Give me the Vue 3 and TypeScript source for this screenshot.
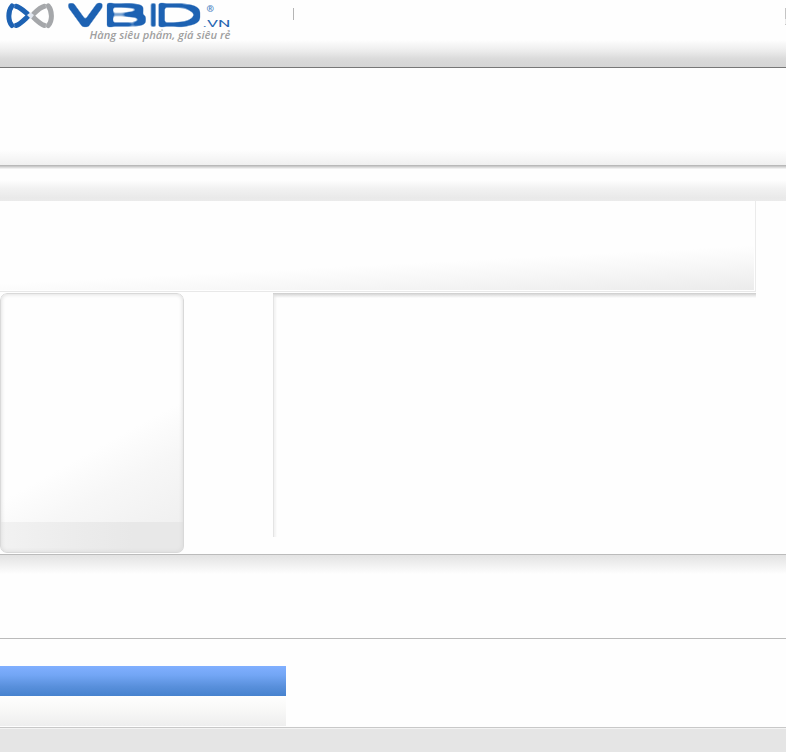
<script setup lang="ts">
interface Letter {
  char: string
  x: number
  scale: number
}

const wordmark: Letter[] = [
  { char: 'V', x: 69, scale: 1.95 },
  { char: 'B', x: 101.6, scale: 2.75 },
  { char: 'I', x: 147.8, scale: 1.5 },
  { char: 'D', x: 153.3, scale: 2.72 },
]
</script>

<template>
  <div class="page">
    <header class="header">
      <svg class="logo" width="240" height="46" viewBox="0 0 240 46">
        <defs>
          <filter id="heavy" x="60" y="0" width="150" height="34" filterUnits="userSpaceOnUse" color-interpolation-filters="sRGB">
            <feMorphology operator="dilate" radius="2" />
            <feGaussianBlur stdDeviation="0.9" />
            <feComponentTransfer><feFuncA type="linear" slope="2.600" intercept="-0.750" /></feComponentTransfer>
          </filter>
        </defs>
        <g fill="none" stroke-linecap="round" stroke-linejoin="round">
          <path d="M12 6C7.800 11 7.800 21 12 25.500" stroke="#1d62b3" stroke-width="5" />
          <path d="M16 6.200C20 7 24 11 27.500 14M16 25.500C20 24.500 24 20 28.500 16" stroke="#1d62b3" stroke-width="5" />
          <path d="M48.200 6C52.500 11 52.500 21 48.200 25.500" stroke="#a5a7aa" stroke-width="5" />
          <path d="M44.500 6.200C40.500 7 36.500 11 33.500 14M44.500 25.500C40.500 24.500 36 20 32 16" stroke="#a5a7aa" stroke-width="5" />
          <path d="M15 5Q9.800 15.700 15 27M45.500 5Q50.700 15.700 45.500 27" stroke="#fff" stroke-width=".5" opacity=".4" />
          <path d="M27 15L30.500 12.500L34 15L31 19Z" fill="#e2e7ef" />
        </g>
        <g class="wordmark" filter="url(#heavy)">
          <text
            v-for="letter in wordmark"
            :key="letter.char"
            :transform="`translate(${letter.x} 25) scale(${letter.scale} 1)`"
          >{{ letter.char }}</text>
        </g>
        <text class="registered" x="206.500" y="12">®</text>
        <text class="domain" x="202.500" y="26.500" textLength="28" lengthAdjust="spacingAndGlyphs">.VN</text>
        <text class="tagline" x="89.500" y="38.500" textLength="141" lengthAdjust="spacingAndGlyphs">Hàng siêu phẩm, giá siêu rẻ</text>
      </svg>
      <i class="divider"></i>
      <i class="edge"></i>
    </header>

    <div class="menu"></div>
    <div class="submenu"></div>

    <section class="feature"><div class="feature-fill"></div></section>

    <main class="content">
      <aside class="card">
        <div class="card-body"></div>
        <div class="card-foot"></div>
      </aside>
      <section class="panel"></section>
    </main>

    <div class="partners"></div>

    <section class="box">
      <div class="box-title"></div>
      <div class="box-body"></div>
    </section>
    <footer class="footer"></footer>
  </div>
</template>

<style>
body { margin: 0; background: #fefefe; }
</style>

<style scoped>
.page {
  height: 752px;
  overflow: hidden;
  display: flex;
  flex-direction: column;
  font-family: "Open Sans", "Liberation Sans", sans-serif;
}
.page > * { box-sizing: border-box; flex-shrink: 0; }
.header {
  height: 68px;
  display: flex;
  align-items: flex-start;
  border-bottom: 1px solid #777;
  background: linear-gradient(#fefefe 40px, #ececec 51px, #dadada 59px, #d5d5d5 67px);
}
.logo { display: block; }
.wordmark text {
  font: 100 28px Roboto, sans-serif;
  fill: #1d62b3;
}
.registered { font: 700 9px "Open Sans", sans-serif; fill: #4b82c2; }
.domain { font: 400 9.500px Roboto, sans-serif; fill: #2867b3; }
.tagline { font: italic 600 11.200px "Open Sans", sans-serif; fill: #a0a0a0; }
.divider { width: 1px; height: 12px; margin: 8px 0 0 53px; background: #b5b5b5; }
.edge {
  width: 1px;
  height: 17px;
  margin: 8px 0 0 auto;
  background: linear-gradient(#c4c4c4 11px, #ededed 11px 16px, #c4c4c4 16px);
}
.menu {
  height: 101px;
  background: linear-gradient(#fefefe 82px, #f0f0f0 97px, #b9b9b9 97px 98px, #cbcbcb 98px 99px, #dedede 99px 100px, #f0f0f0 100px);
}
.submenu {
  height: 32px;
  background: linear-gradient(#fefefe 11px, #f2f2f2 19px, #e9e9e9 29px, #ebebeb 32px);
}
.feature {
  width: 756px;
  height: 91px;
  margin-bottom: 1px;
  padding: 0 1px 1px 0;
  border-right: 1px solid #ebebeb;
  border-bottom: 1px solid #e8e8e8;
}
.feature-fill {
  height: 89px;
  background: linear-gradient(177.100deg, #fefefe 65%, #f7f7f7 79%, #ebebeb 100%);
}
.content { display: flex; height: 261px; align-items: flex-start; }
.card {
  position: relative;
  width: 184px;
  height: 260px;
  overflow: hidden;
  border-radius: 7px;
}
.card::after {
  content: "";
  position: absolute;
  inset: 0;
  border: 1px solid #d9d9d9;
  border-radius: 7px;
  box-shadow: inset 0 0 4px #d8d8d8;
}
.card-body { height: 229px; background: linear-gradient(151deg, #fefefe 63%, #f7f7f7 78%, #f0f0f0 100%); }
.card-foot { height: 31px; background: linear-gradient(90deg, #f2f2f2, #ececec 40%, #e8e8e8 72%); }
.panel {
  width: 483px;
  height: 244px;
  margin-left: 89px;
  background:
    linear-gradient(#ccc, #e2e2e2 2px, transparent 5px) top / 100% 6px no-repeat,
    linear-gradient(90deg, #e4e4e4 1px, #f3f3f3 1px 2px, #fefefe 4px);
}
.partners {
  height: 85px;
  border-top: 1px solid #bbb;
  border-bottom: 1px solid #bbb;
  background: linear-gradient(#e2e2e2, #fefefe 19px);
}
.box { width: 286px; height: 60px; margin: 27px 0 1px; }
.box-title { height: 30px; background: linear-gradient(#80afff, #73a6f5 30%, #5990dc 68%, #4682ce); }
.box-body { height: 30px; background: linear-gradient(#fefefe, #f8f8f7 45%, #eee); }
.footer {
  flex: 1 0 auto;
  border-top: 1px solid #c8c8c8;
  background: linear-gradient(#f3f3f3 1px, #e5e5e5 1px);
}
</style>
